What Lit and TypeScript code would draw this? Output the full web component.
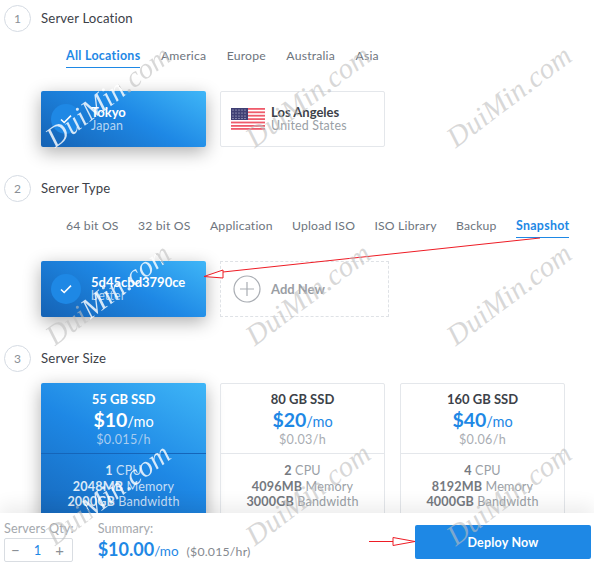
import { LitElement, html, css, svg } from "lit";
import { customElement } from "lit/decorators.js";

const flag = html`<svg class="flag" width="34" height="22" viewBox="0 0 34 22">
  <rect width="34" height="22" fill="#fff"/>
  ${[0, 3.4, 6.8, 10.2, 13.6, 17, 20].map((y) => svg`<rect y="${y}" width="34" height="1.8" fill="#ef5b6b"/>`)}
  <rect width="17" height="12" fill="#3f3f74"/>
  ${[2, 5, 8, 11, 14].flatMap((x) => [2, 5, 8, 10.5].map((y) => svg`<circle cx="${x}" cy="${y}" r=".6" fill="#d8d8ea"/>`))}
</svg>`;

const check = html`<svg width="14" height="12" viewBox="0 0 14 12"><path d="M2 6.5l3.2 3L12 2.6" fill="none" stroke="#fff" stroke-width="1.6"/></svg>`;

const plans = [
  { ssd: "55 GB SSD", price: "$10", hr: "$0.015/h", cpu: "1", mem: "2048MB", bw: "2000GB", on: true },
  { ssd: "80 GB SSD", price: "$20", hr: "$0.03/h", cpu: "2", mem: "4096MB", bw: "3000GB", on: false },
  { ssd: "160 GB SSD", price: "$40", hr: "$0.06/h", cpu: "4", mem: "8192MB", bw: "4000GB", on: false },
];

const G = "rgba(190,190,190,.6)";
const W = "rgba(255,255,255,.82)";
const marks: [number, number, string][] = [
  [59, 121, `linear-gradient(90deg, ${W} 60%, ${G} 60%)`],
  [259, 121, ""],
  [460, 121, ""],
  [59, 319, `linear-gradient(90deg, ${G} 30%, ${W} 30%, ${W} 92%, ${G} 92%)`],
  [259, 319, ""],
  [460, 319, ""],
  [59, 519, `linear-gradient(90deg, ${G} 33%, ${W} 33%)`],
  [259, 519, ""],
  [460, 519, ""],
];

@customElement("app-root")
export class AppRoot extends LitElement {
  static styles = css`
    :host { display: block; width: 594px; height: 563px; position: relative; overflow: hidden; background: #fff;
      font-family: "Lato", "Open Sans", sans-serif; color: #636b75; font-size: 13px; }
    .page { height: 563px; display: flex; flex-direction: column; }
    .content { height: 513px; overflow: hidden; padding: 5px 0 0 4px; box-sizing: border-box; }
    .head { display: flex; align-items: center; gap: 10px; height: 27px; }
    .num { width: 27px; height: 27px; box-sizing: border-box; border: 1px solid #d5dbe3; border-radius: 50%; display: flex; align-items: center; justify-content: center; color: #8a8f96; font-size: 12px; }
    .title { font-size: 13.2px; color: #3c4148; letter-spacing: .15px; position: relative; top: -1px; }
    .tabs { display: flex; margin: 11px 0 0 62px; gap: 20.5px; height: 25px; }
    .tabs.tight { gap: 19.3px; }
    .tab { font-size: 12.2px; color: #6d747d; padding-top: 5px; letter-spacing: .2px; white-space: nowrap; box-sizing: border-box; height: 25px; }
    .tab.on { color: #1e88e5; font-weight: 700; font-size: 12.4px; letter-spacing: .3px; border-bottom: 1px solid #1e88e5; }
    .cards { display: flex; margin: 23px 0 0 37px; gap: 14px; }
    .card { width: 165px; height: 56px; box-sizing: border-box; border-radius: 2px; border: 1px solid #e4e7eb; display: flex; align-items: center; background: #fff; }
    .on-card { border: 0; color: #fff; background: linear-gradient(30deg, #1562b4 0%, #1e88e5 55%, #3fb6f7 100%); box-shadow: 0 5px 18px rgba(0,0,0,.32); }
    .dot { width: 30px; height: 30px; border-radius: 50%; background: #1e88e5; margin-left: 10px; flex: none; display: flex; align-items: center; justify-content: center; }
    .txt { display: flex; flex-direction: column; line-height: 14px; margin-left: 10px; }
    .name { font-size: 13px; font-weight: 700; color: #3c4148; }
    .sub { font-size: 12.4px; color: #9a9fa6; letter-spacing: .2px; }
    .on-card .name { color: #fff; }
    .on-card .sub { color: #b7d6f3; }
    .flag { margin-left: 10px; flex: none; }
    .add { width: 169px; border: 1px dashed #dfe2e6; border-radius: 0; }
    .add svg { margin-left: 12px; }
    .add span { margin-left: 10px; font-weight: 700; color: #9a9ea4; font-size: 13px; }
    .sec { margin-top: 28px; }
    .sec3 { margin-top: 28px; }
    .plans { display: flex; margin: 11px 0 0 37px; gap: 14px; }
    .plan { width: 165px; height: 160px; flex: none; box-sizing: border-box; border: 1px solid #e4e7eb; border-radius: 2px; text-align: center; display: flex; flex-direction: column; }
    .plan:last-child { margin-left: 1px; }
    .plan.on-card { border: 0; }
    .top { height: 70px; box-sizing: border-box; border-bottom: 1px solid #e4e7eb; padding-top: 7px; flex: none; }
    .on-card .top { border-bottom-color: #1565b9; height: 71px; padding-top: 8px; }
    .ssd { font-size: 13px; font-weight: 700; color: #3c4148; line-height: 16px; }
    .price { color: #1e88e5; font-size: 19.5px; font-weight: 700; line-height: 23px; margin-top: 1px; }
    .price small { font-size: 14.5px; font-weight: 400; }
    .hr { font-size: 12.6px; color: #a9adb3; line-height: 13px; letter-spacing: .3px; }
    .on-card .ssd, .on-card .price { color: #fff; }
    .on-card .hr { color: #a9cdf0; }
    .spec { padding-top: 9px; font-size: 12.6px; line-height: 15.6px; color: #9a9fa6; letter-spacing: .15px; }
    .spec b { color: #75797f; }
    .on-card .spec { color: #c5def6; }
    .on-card .spec b { color: #dbe9f8; }
    .foot { height: 50px; background: #fff; position: relative; box-shadow: 0 -8px 18px rgba(0,0,0,.07); display: flex; padding: 8px 3px 0 4px; box-sizing: border-box; }
    .qty-label, .sum-label { font-size: 12.6px; color: #a4a8ad; line-height: 15px; letter-spacing: .1px; }
    .stepper { width: 69px; height: 24px; box-sizing: border-box; border: 1px solid #d9dde2; border-radius: 2px; display: flex; justify-content: space-between; align-items: center; padding: 0 8px 0 6px; margin-top: 2px; font-size: 15px; color: #8a8f96; }
    .stepper b { color: #1e88e5; font-weight: 400; font-size: 13px; }
    .sum { margin-left: 24px; }
    .total { color: #1e88e5; font-size: 18px; font-weight: 700; line-height: 24px; margin-top: 1px; white-space: nowrap; }
    .total small { font-size: 13.5px; font-weight: 400; }
    .total em { font-style: normal; font-size: 12.3px; font-weight: 400; color: #85898f; margin-left: 8px; letter-spacing: .2px; }
    .deploy { margin: 4px 0 0 auto; width: 176px; height: 34px; background: #1e88e5; border: 0; border-radius: 2px; color: #fff; font: 700 12.5px "Lato", sans-serif; letter-spacing: .2px; }
    .over { position: absolute; left: 0; top: 0; pointer-events: none; }
    .wm { position: absolute; font: italic 29px "Liberation Serif", serif; color: rgba(190,190,190,.6); white-space: nowrap; transform: rotate(-37deg); transform-origin: left bottom; letter-spacing: .2px; }
    .wm.split { color: transparent; -webkit-background-clip: text; background-clip: text; }
  `;

  render() {
    return html`<div class="page">
      <div class="content">
        <div class="head"><div class="num">1</div><div class="title">Server Location</div></div>
        <div class="tabs">
          <div class="tab on">All Locations</div><div class="tab">America</div><div class="tab">Europe</div><div class="tab">Australia</div><div class="tab">Asia</div>
        </div>
        <div class="cards">
          <div class="card on-card"><div class="dot">${check}</div><div class="txt"><span class="name">Tokyo</span><span class="sub">Japan</span></div></div>
          <div class="card">${flag}<div class="txt" style="margin-left:6px"><span class="name">Los Angeles</span><span class="sub">United States</span></div></div>
        </div>

        <div class="sec">
          <div class="head"><div class="num">2</div><div class="title">Server Type</div></div>
          <div class="tabs tight">
            <div class="tab">64 bit OS</div><div class="tab">32 bit OS</div><div class="tab">Application</div><div class="tab">Upload ISO</div><div class="tab">ISO Library</div><div class="tab">Backup</div><div class="tab on">Snapshot</div>
          </div>
          <div class="cards">
            <div class="card on-card"><div class="dot">${check}</div><div class="txt"><span class="name">5d45cbd3790ce</span><span class="sub">better</span></div></div>
            <div class="card add"><svg width="28" height="28" viewBox="0 0 28 28"><circle cx="14" cy="14" r="13" fill="none" stroke="#a9adb3" stroke-width="1.2"/><path d="M14 7v14M7 14h14" stroke="#a9adb3" stroke-width="1.2"/></svg><span>Add New</span></div>
          </div>
        </div>

        <div class="sec sec3">
          <div class="head"><div class="num">3</div><div class="title">Server Size</div></div>
          <div class="plans">
            ${plans.map((p) => html`<div class="plan ${p.on ? "on-card" : ""}">
              <div class="top">
                <div class="ssd">${p.ssd}</div>
                <div class="price">${p.price}<small>/mo</small></div>
                <div class="hr">${p.hr}</div>
              </div>
              <div class="spec"><b>${p.cpu}</b> CPU<br><b>${p.mem}</b> Memory<br><b>${p.bw}</b> Bandwidth</div>
            </div>`)}
          </div>
        </div>
      </div>
      <div class="foot">
        <div>
          <div class="qty-label">Servers Qty:</div>
          <div class="stepper"><span>−</span><b>1</b><span>+</span></div>
        </div>
        <div class="sum">
          <div class="sum-label">Summary:</div>
          <div class="total">$10.00<small>/mo</small><em>($0.015/hr)</em></div>
        </div>
        <button class="deploy">Deploy Now</button>
      </div>
    </div>
    <svg class="over" width="594" height="563" viewBox="0 0 594 563">
      <path d="M540 238L223 272" fill="none" stroke="#ee1c25" stroke-width="1"/>
      <path d="M204 276.5L223 270V278Z" fill="#fff" stroke="#ee1c25" stroke-width="1"/>
      <path d="M369 541.5H393" fill="none" stroke="#ee1c25" stroke-width="1"/>
      <path d="M393 537.5V545.5L415 541.5Z" fill="#fff" stroke="#ee1c25" stroke-width="1"/>
    </svg>
    ${marks.map(([x, y, g]) => html`<div class="wm ${g ? "split" : ""}" style="left:${x}px;top:${y}px;${g ? `background-image:${g}` : ""}">DuiMin.com</div>`)}`;
  }
}
